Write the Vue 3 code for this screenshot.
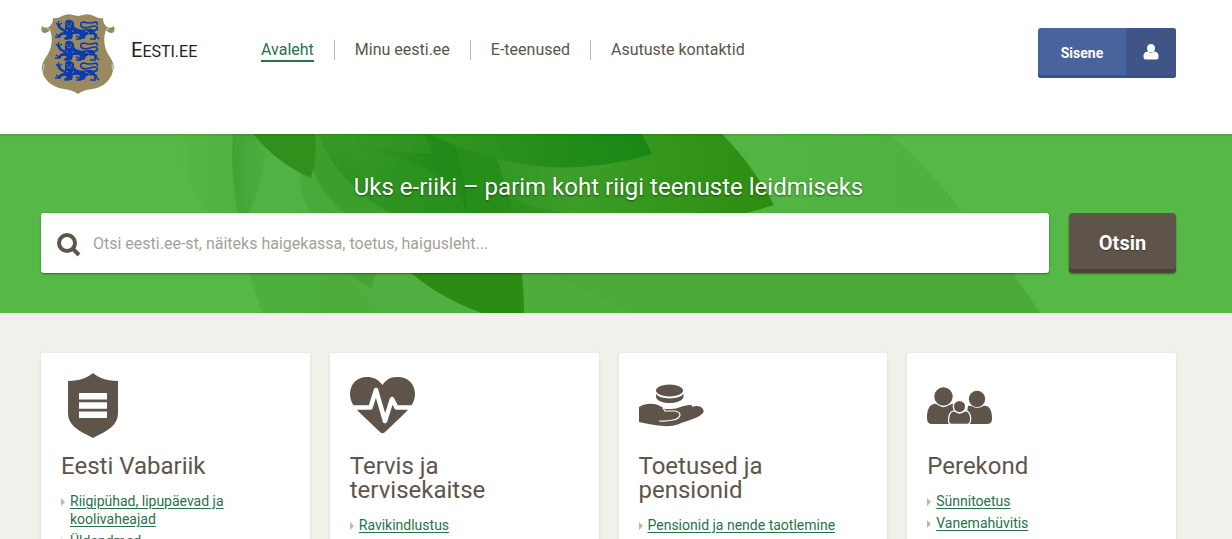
<script setup>
    import { ref } from "vue";

    const query = ref("");

    const navItems = [
        { label: "Avaleht", active: true },
        { label: "Minu eesti.ee" },
        { label: "E-teenused" },
        { label: "Asutuste kontaktid" },
    ];

    const topics = [
        { icon: "shield", title: "Eesti Vabariik", links: ["Riigipühad, lipupäevad ja koolivaheajad", "Üldandmed"] },
        { icon: "heart", title: "Tervis ja tervisekaitse", links: ["Ravikindlustus"] },
        { icon: "hand", title: "Toetused ja pensionid", links: ["Pensionid ja nende taotlemine"] },
        { icon: "family", title: "Perekond", links: ["Sünnitoetus", "Vanemahüvitis"] },
    ];

    // vertical position of the three lions on the coat of arms
    const lions = [6, 27, 47];
</script>
<template>
    <div class="page">
        <header class="header">
            <a class="logo" href="#" aria-label="Eesti.ee">
                <svg class="arms" viewBox="0 0 74 81" aria-hidden="true">
                    <path fill="#9a8a62" d="M12 4 Q16 5 21 2 Q27 -1 32 1 L37 2 L42 1 Q47 -1 53 2 Q58 5 62 4 Q62 10 66 13 Q70 15 73 12 Q75 19 70 19 Q67 19 65 16 C62 24 63 33 67 40 C72 47 74 52 72 57 C69 69 59 74 51 75 C43 76 40 78 37 80 C34 78 31 76 23 75 C15 74 4 69 1 57 C0 52 2 47 7 40 C11 33 12 24 9 16 Q7 19 4 19 Q-1 19 1 12 Q4 15 8 13 Q12 10 12 4 Z" />
                    <path fill="none" stroke="#fff" stroke-width="0.6" d="M9 16 Q8 14 6 15 M65 16 Q66 14 68 15 M1 59 Q3 54 3 50 M73 59 Q71 54 71 50" />
                    <g v-for="y in lions" :key="y" :transform="`translate(14 ${y})`">
                        <g fill="none" stroke="#0a3cae" stroke-linejoin="round">
                            <path stroke-width="2.600" d="M10 11 L5 8 L3 4" />
                            <path stroke-width="1.300" d="M3 5 L1 3 M3 5 L4 1 M4 5 L7 3" />
                            <path stroke-width="2.600" d="M12 13 L6 14 L4 17" />
                            <path stroke-width="1.500" d="M5 17 H0 M4 16 L1 14" />
                            <path stroke-width="3" d="M25 14 L29 17 L24 18" />
                            <path stroke-width="1.500" d="M26 19 L21 19 M24 17 L21 16" />
                            <path stroke-width="2.600" d="M38 13 L41 15 L40 18" />
                            <path stroke-width="1.600" d="M41 19 H35 M42 17 L44 19" />
                            <path stroke-width="1.700" d="M37 11 Q44 10 42 7 Q40 5 35 7 Q28 9 26 6 Q25 2 29 2 Q34 4 41 2 Q43 3 42 5" />
                        </g>
                        <path fill="#0a3cae" d="M10 3 Q11 -1 15 0 Q20 1 19 6 L21 8 Q26 11 32 9 Q39 8 40 12 Q39 16 34 14 L28 17 Q25 15 24 14 L18 14 L17 19 L10 20 L9 18 L12 16 L8 13 L10 9 Z" />
                        <path fill="none" stroke="#9a8a62" stroke-width="0.8" d="M11 4 H13 M15 4 H17 M12 7 Q14 5 16 7 M19 10 L17 12 M11 10 L13 11 M30 11 Q33 11 34 13" />
                    </g>
                </svg>
                <span class="wordmark"><span class="initial">E</span>ESTI.EE</span>
            </a>
            <nav aria-label="Peamenüü">
                <ul class="nav-list">
                    <li v-for="item in navItems" :key="item.label" class="nav-item">
                        <a href="#" class="nav-link" :class="{ active: item.active }">{{ item.label }}</a>
                    </li>
                </ul>
            </nav>
            <button class="login" type="button">
                <span class="login-label">Sisene</span>
                <span class="login-icon">
                    <svg viewBox="0 0 16 16" width="16" height="16" aria-hidden="true">
                        <path fill="#fff" d="M8 0 C5.500 0 4 2 4 4 C4 6 5 8 6 8.500 L10 8.500 C11 8 12 6 12 4 C12 2 10.500 0 8 0 Z M4.500 7.500 Q8 10.500 11.500 7.500 Q16 8 15.500 13 Q15.500 15.500 13.500 15.500 H2.500 Q0.500 15.500 0.500 13 Q0 8 4.500 7.500 Z" />
                    </svg>
                </span>
            </button>
        </header>

        <section class="hero">
            <svg class="leaves" viewBox="0 0 1232 179" preserveAspectRatio="xMidYMid slice" aria-hidden="true">
                <defs>
                    <linearGradient id="fade" gradientUnits="userSpaceOnUse" x1="170" y1="0" x2="330" y2="0">
                        <stop offset="0" stop-color="#55b847" />
                        <stop offset="0.45" stop-color="#4db03f" />
                        <stop offset="1" stop-color="#4cad3d" />
                    </linearGradient>
                    <linearGradient id="strip" x1="0" y1="0" x2="1" y2="0">
                        <stop offset="0" stop-color="#40a334" />
                        <stop offset="1" stop-color="#4cae3f" />
                    </linearGradient>
                    <linearGradient id="deep" gradientUnits="userSpaceOnUse" x1="319" y1="0" x2="512" y2="40">
                        <stop offset="0" stop-color="#359a24" />
                        <stop offset="0.6" stop-color="#238b19" />
                        <stop offset="1" stop-color="#1d8717" />
                    </linearGradient>
                    <linearGradient id="middle" x1="0" y1="0" x2="1" y2="0">
                        <stop offset="0" stop-color="#2c9220" />
                        <stop offset="0.3" stop-color="#3c9d28" />
                        <stop offset="1" stop-color="#2c8d0e" />
                    </linearGradient>
                    <linearGradient id="crown" x1="0" y1="0" x2="1" y2="0">
                        <stop offset="0" stop-color="#32971f" />
                        <stop offset="1" stop-color="#198614" />
                    </linearGradient>
                    <linearGradient id="right" gradientUnits="userSpaceOnUse" x1="700" y1="0" x2="900" y2="0">
                        <stop offset="0" stop-color="#54b545" />
                        <stop offset="1" stop-color="#4fb240" />
                    </linearGradient>
                </defs>
                <path fill="url(#fade)" d="M168 0 Q184 42 208 79 L249 139 L262 179 H800 V0 Z" />
                <path fill="#55b847" d="M208 79 L249 139 H200 Z" />
                <path fill="url(#right)" d="M700 0 H890 Q930 35 963 79 L1013 139 L1040 179 H700 Z" />
                <path fill="#4aab3b" d="M511 115 L552 139 Q594 163 637 179 H1040 L1013 139 L990 110 Z" />
                <path fill="url(#strip)" d="M233 0 H252 L266 14 Q262 50 249 79 H238 Q230 38 233 0 Z" />
                <path fill="#53b449" opacity="0.5" d="M266 14 L311 44 L345 79 H262 L249 79 Q262 50 266 14 Z" />
                <path fill="#45a637" opacity="0.7" d="M300 38 L311 44 L313 36 L330 60 L345 79 H310 Q300 60 300 38 Z" />
                <path fill="#3d9f2b" d="M315 0 H330 L400 79 H345 Q322 60 313 36 Z" />
                <path fill="url(#deep)" d="M318 0 H500 L512 79 H390 Q336 48 318 0 Z" />
                <path fill="#3d9f2b" opacity="0.35" d="M323 0 H425 L432 19 Q373 21 323 0 Z" />
                <path fill="#3d9f2b" opacity="0.3" d="M323 2 Q400 17 455 50 L467 79 H376 Q372 40 323 2 Z" />
                <path fill="url(#middle)" d="M483 0 H722 Q752 30 774 71 L747 79 H511 Q505 35 483 0 Z" />
                <path fill="#2b901b" opacity="0.8" d="M450 0 H483 Q504 38 511 79 H467 Q466 36 450 0 Z" />
                <path fill="#48a635" opacity="0.2" d="M496 24 Q560 40 620 28 Q550 66 506 61 Z" />
                <path fill="#1f8415" opacity="0.3" d="M507 62 Q527 73 565 79 H511 Z" />
                <path fill="url(#crown)" d="M430 0 H642 L652 20 Q565 46 487 22 Q455 13 430 0 Z" />
                <path fill="#318f1c" d="M253 0 H315 Q317 24 311 44 Q277 29 253 0 Z" />
                <path fill="#44a535" d="M340 134 H378 L371 154 Q355 149 340 134 Z" />
                <path fill="#52b344" opacity="0.6" d="M345 139 Q363 160 380 179 H480 L411 139 H376 L371 154 Z" />
                <path fill="#2a8c14" d="M400 130 L411 139 Q442 165 482 179 H524 Q524 158 521 130 Z" />
            </svg>
            <div class="hero-content">
                <h1 class="hero-title"><label for="search">Uks e-riiki – parim koht riigi teenuste leidmiseks</label></h1>
                <form class="search" role="search" @submit.prevent>
                    <div class="search-field">
                        <svg class="search-icon" viewBox="0 0 24 24" width="24" height="24" aria-hidden="true">
                            <circle cx="10" cy="10" r="8" fill="none" stroke="#5e5449" stroke-width="4" />
                            <path d="M16 16 L22 22" fill="none" stroke="#5e5449" stroke-width="4" />
                        </svg>
                        <input id="search" v-model="query" class="search-input" type="text" placeholder="Otsi eesti.ee-st, näiteks haigekassa, toetus, haigusleht..." />
                    </div>
                    <button class="search-button" type="submit">Otsin</button>
                </form>
            </div>
        </section>

        <main class="topics">
            <section v-for="topic in topics" :key="topic.title" class="card">
                <svg class="card-icon" viewBox="0 0 65 65" aria-hidden="true">
                    <template v-if="topic.icon === 'shield'">
                        <path d="M32 0 C37 4 44 8 57 8 V40 C57 52 48 57 32 65 C16 57 7 52 7 40 V8 C20 8 27 4 32 0 Z" />
                        <path fill="#fff" d="M18 20 H46 V26.500 H18 Z M18 29.200 H46 V35.700 H18 Z M18 38.400 H46 V45 H18 Z" />
                    </template>
                    <template v-else-if="topic.icon === 'heart'">
                        <path d="M32.500 12 C38 4 43 4 48 4 C58 4 65 11 65 21 C65 30 59 36 54 41 L34.500 59.500 Q32.500 61 30.500 59.500 L11 41 C6 36 0 30 0 21 C0 11 7 4 17 4 C23 4 28 6 32.500 12 Z" />
                        <path fill="none" stroke="#fff" stroke-width="4.500" stroke-linejoin="round" d="M0 34.500 H20.500 L26 17 L35 48 L42 26 L46.500 34.500 H65" />
                    </template>
                    <template v-else-if="topic.icon === 'hand'">
                        <ellipse cx="30.500" cy="17.500" rx="13.500" ry="6" />
                        <path d="M17 20.500 C20 27 41 27 44.500 20.500 V24 C42 32 19 32 17 24 Z" />
                        <path d="M0 34 C7 30 15 30 21 33 L26 36 H32 C39 36 44 32 51 32 Q54 32 53 34 Q58 32 62 34 Q66 37 64 40 C60 45 47 48 40 51 C29 55 20 53 0 49 Z" />
                        <path fill="none" stroke="#fff" stroke-width="1.200" d="M24 35 L26 38 H36 Q41 39 41 42 Q40 46 34 47 Q28 48.500 20 48" />
                    </template>
                    <template v-else>
                        <path d="M7 31 C10 30 13 35 18 34 C22 33 24 30 27 31 L31 48 L29 51 H5 Q0 51 0 45 C0 37 2 32 7 31 Z M41 33 C45 32 46 35 50 35 C55 35 56 32 59 33 C64 34 65 40 65 46 Q65 51 60 51 H38 Z" />
                        <circle cx="16.500" cy="23.500" r="9.200" />
                        <circle cx="50" cy="26" r="8.200" />
                        <path stroke="#fff" stroke-width="1.300" d="M26 38 C29 37 29 40 32.500 40 C36 40 37 37 40 38 C43 40 44 44 43.500 48 Q43 51.500 39 51.500 H26 Q21.500 51.500 21.500 48 C21.500 43 23 39 26 38 Z" />
                        <circle cx="32.500" cy="33.500" r="6.200" stroke="#fff" stroke-width="1.300" />
                    </template>
                </svg>
                <h2 class="card-title">{{ topic.title }}</h2>
                <ul class="card-links">
                    <li v-for="link in topic.links" :key="link">
                        <a href="#">{{ link }}</a>
                    </li>
                </ul>
            </section>
        </main>
    </div>
</template>

<style>
body {
    background: #f0f1eb;
}
</style>

<style scoped>
    .page {
        font-family: Roboto, "Liberation Sans", sans-serif;
        color: #5e5449;
    }
    ul {
        list-style-type: none;
        margin: 0;
        padding: 0;
    }
    .header {
        display: flex;
        align-items: flex-start;
        min-height: 134px;
        box-sizing: border-box;
        padding: 14px 56px 0 41px;
        background: white;
    }
    .logo {
        display: flex;
        align-items: center;
        gap: 16px;
        width: 220px;
        flex-shrink: 0;
        color: #222;
        text-decoration: none;
    }
    .arms {
        width: 74px;
        height: 81px;
    }
    .wordmark {
        font-size: 16px;
        line-height: 24px;
        padding-bottom: 8px;
    }
    .initial {
        font-size: 20px;
    }
    .nav-list {
        display: flex;
        padding-top: 26px;
    }
    .nav-item {
        height: 20px;
        font-size: 16px;
        line-height: 20px;
    }
    .nav-item + .nav-item {
        margin-left: 20px;
        padding-left: 20px;
        border-left: 1px solid #c0b8a0;
    }
    .nav-link {
        display: block;
        color: #5e5449;
        text-decoration: none;
    }
    .nav-link.active {
        color: #26734a;
        border-bottom: 2px solid #26734a;
    }
    .login {
        display: flex;
        margin: 14px 0 0 auto;
        padding: 0;
        height: 50px;
        border: 0;
        border-radius: 3px;
        overflow: hidden;
        background: #49639c;
        box-shadow: inset 0 -3px 0 #3b5183;
        color: white;
        font-family: inherit;
        font-size: 14px;
        font-weight: bold;
        cursor: pointer;
    }
    .login-label {
        width: 88px;
        line-height: 50px;
    }
    .login-icon {
        display: flex;
        align-items: center;
        justify-content: center;
        width: 50px;
        height: 47px;
        background: #3e5586;
    }

    .hero {
        position: relative;
        overflow: hidden;
        background: #55b847;
    }
    .leaves {
        position: absolute;
        inset: 0;
        width: 100%;
        height: 100%;
    }
    .hero-content {
        position: relative;
        padding: 39px 56px 40px 41px;
        background: linear-gradient(rgba(0, 0, 0, 0.12), transparent 3px);
    }
    .hero-title {
        margin: 0 0 12px;
        color: white;
        font-size: 24px;
        font-weight: normal;
        line-height: 28px;
        text-align: center;
        text-shadow: 0 1px 2px rgba(0, 0, 0, 0.5);
    }
    .search {
        display: flex;
        gap: 20px;
    }
    .search-field {
        display: flex;
        flex: 1;
        align-items: center;
        height: 60px;
        padding-left: 16px;
        box-sizing: border-box;
        border-radius: 3px;
        background: white;
        box-shadow: 0 1px 2px rgba(0, 0, 0, 0.4);
    }
    .search-icon {
        margin-top: 4px;
    }
    .search-input {
        flex: 1;
        height: 60px;
        box-sizing: border-box;
        padding: 0 12px;
        border: 0;
        outline: 0;
        background: transparent;
        color: #5e5449;
        font-family: inherit;
        font-size: 16px;
    }
    .search-input::placeholder {
        color: #a69f97;
    }
    .search-button {
        width: 107px;
        height: 60px;
        padding: 0;
        border: 0;
        border-radius: 4px;
        background: #5e5449;
        box-shadow: inset 0 -4px 0 #4d4239, 0 1px 2px rgba(0, 0, 0, 0.4);
        color: white;
        font-family: inherit;
        font-size: 20px;
        font-weight: bold;
        text-shadow: 0 1px 1px rgba(0, 0, 0, 0.4);
        cursor: pointer;
    }

    .topics {
        display: grid;
        grid-template-columns: repeat(4, 1fr);
        gap: 20px;
        padding: 40px 56px 40px 41px;
    }
    .card {
        padding: 20px;
        border-radius: 3px;
        background: white;
        box-shadow: 0 1px 4px rgba(0, 0, 0, 0.08);
    }
    .card-icon {
        display: block;
        width: 65px;
        height: 65px;
        fill: #5e5449;
    }
    .card-title {
        max-width: 180px;
        margin: 16px 0 14px;
        font-size: 24px;
        font-weight: normal;
        line-height: 24px;
    }
    .card-links li {
        position: relative;
        max-width: 200px;
        margin-bottom: 4px;
        padding-left: 9px;
        font-size: 14px;
        line-height: 18px;
    }
    .card-links li::before {
        content: "";
        position: absolute;
        top: 6px;
        left: 0;
        border: 4px solid transparent;
        border-left-color: #c0b8a0;
        border-right-width: 0;
    }
    .card-links a {
        color: #26734a;
        text-underline-offset: 2px;
    }
</style>
